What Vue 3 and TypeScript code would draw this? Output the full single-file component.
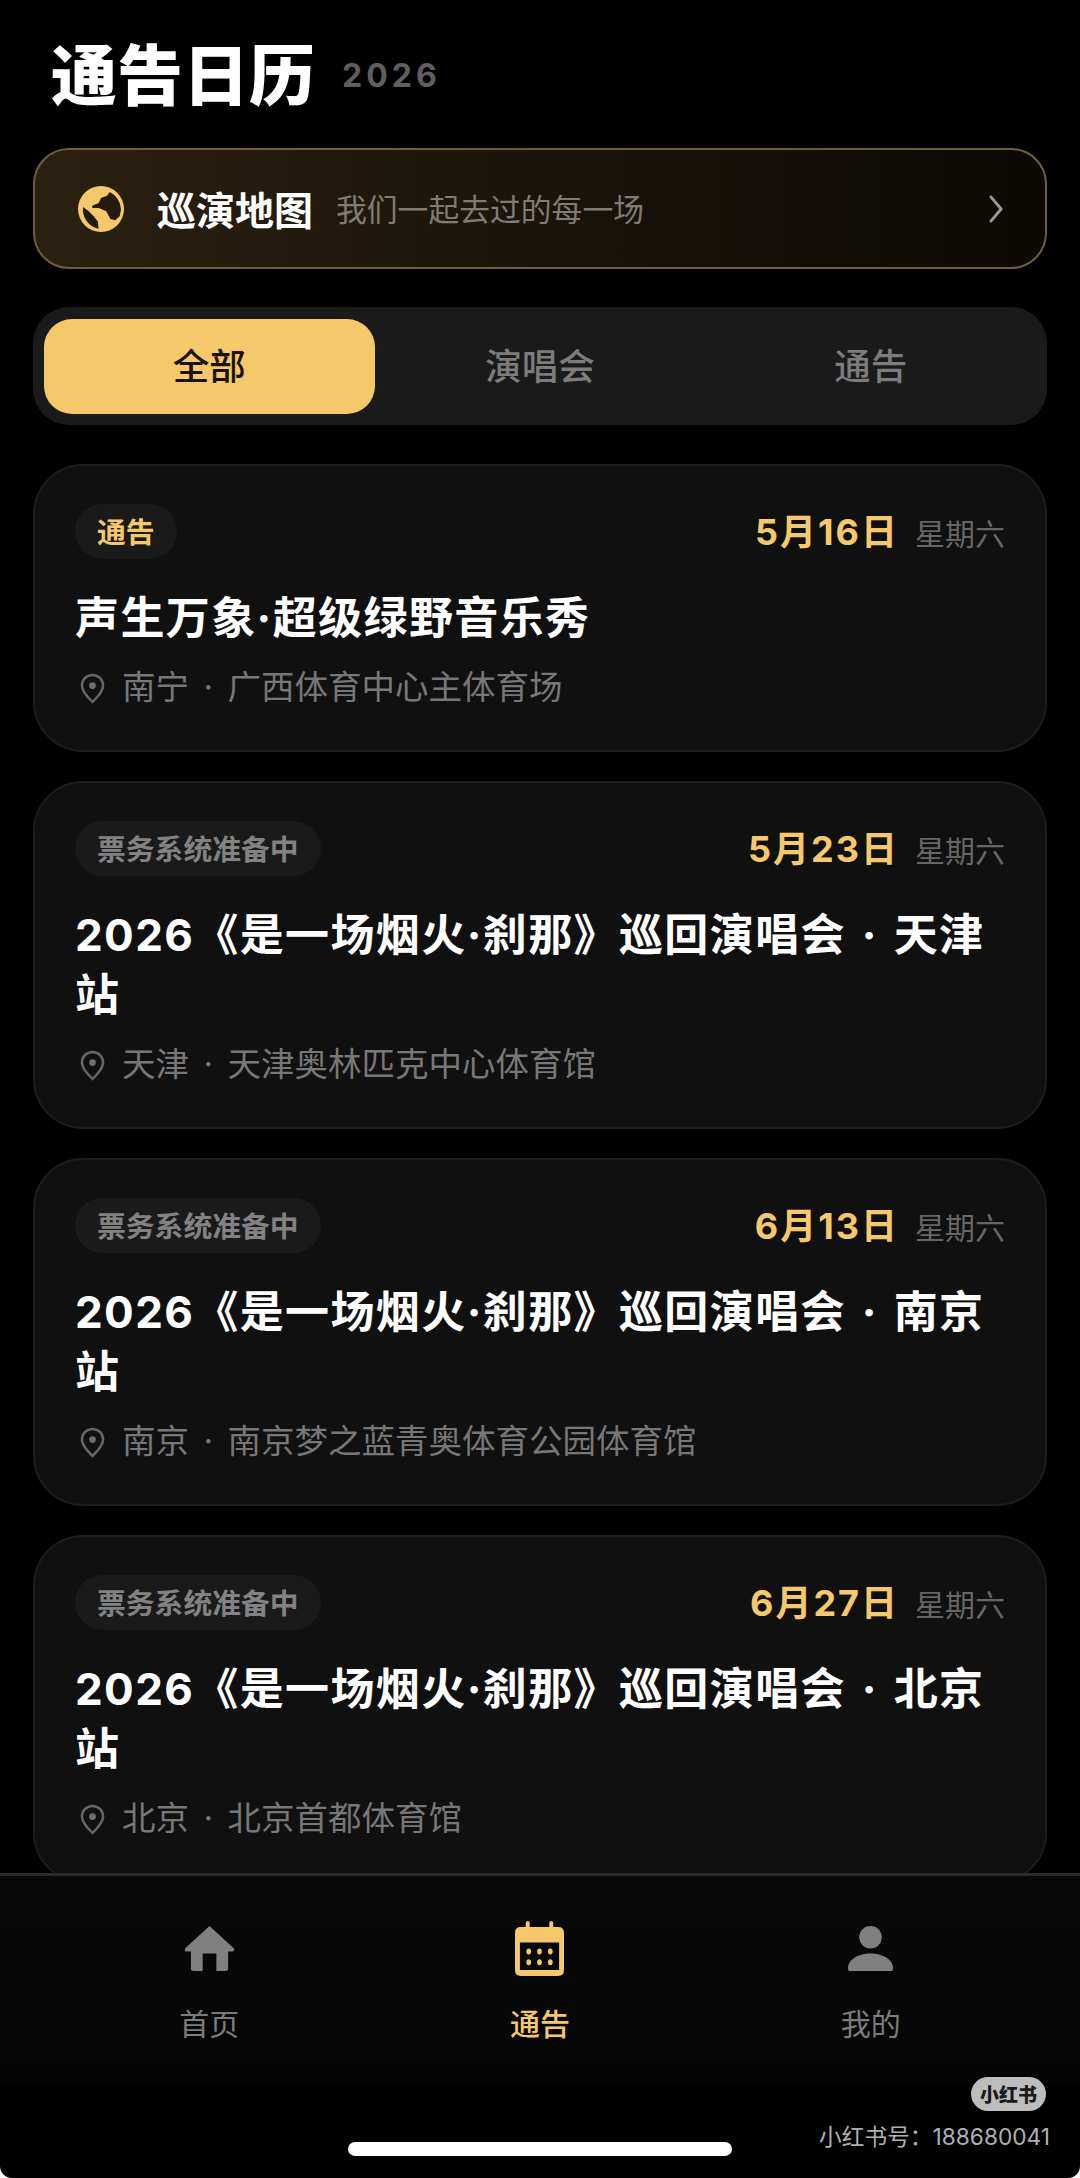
<script setup lang="ts">
interface Item {
  tag: string
  active?: boolean
  date: string
  title: string
  loc: string
}
const items: Item[] = [
  { tag: '通告', active: true, date: '5月16日', title: '声生万象·超级绿野音乐秀', loc: '南宁 · 广西体育中心主体育场' },
  { tag: '票务系统准备中', date: '5月23日', title: '2026《是一场烟火·刹那》巡回演唱会 · 天津站', loc: '天津 · 天津奥林匹克中心体育馆' },
  { tag: '票务系统准备中', date: '6月13日', title: '2026《是一场烟火·刹那》巡回演唱会 · 南京站', loc: '南京 · 南京梦之蓝青奥体育公园体育馆' },
  { tag: '票务系统准备中', date: '6月27日', title: '2026《是一场烟火·刹那》巡回演唱会 · 北京站', loc: '北京 · 北京首都体育馆' },
]
</script>

<template>
  <div class="page">
    <main class="main">
      <header class="head">
        <h1>通告日历</h1>
        <span class="year">2026</span>
      </header>

      <div class="banner">
        <svg class="globe" viewBox="0 0 46 46">
          <circle cx="23" cy="23" r="23" fill="#f5c96b" />
          <path d="M14.300 19.700 L20.700 17 L23 12 L29 9.700 L31.700 6 A20 20 0 0 1 43 23.500 L41.700 30.300 L37.300 34.300 L32.300 33 L28.300 25.300 L20.700 22 L14.300 22 Z" fill="#241b0e" />
          <path d="M5 21 L10.700 25.300 L15.700 30.300 L19.700 35.300 L20.700 42.800 A20 20 0 0 1 5 21 Z" fill="#241b0e" />
        </svg>
        <strong>巡演地图</strong>
        <span class="sub">我们一起去过的每一场</span>
        <svg class="chev" viewBox="0 0 18 32">
          <path d="M3 3 L14 16 L3 29" fill="none" stroke="#9a9a96" stroke-width="3" stroke-linecap="round" stroke-linejoin="round" />
        </svg>
      </div>

      <div class="seg">
        <div class="seg-item on">全部</div>
        <div class="seg-item">演唱会</div>
        <div class="seg-item">通告</div>
      </div>

      <div class="list">
        <article v-for="it in items" :key="it.date" class="card">
          <div class="row">
            <span class="tag" :class="{ hot: it.active }">{{ it.tag }}</span>
            <span class="date">{{ it.date }}</span>
            <span class="week">星期六</span>
          </div>
          <h2>{{ it.title }}</h2>
          <div class="loc">
            <svg viewBox="0 0 26 32">
              <path d="M13 2 C6.500 2 2 7 2 13 C2 20 9 26 13 30 C17 26 24 20 24 13 C24 7 19.500 2 13 2 Z" fill="none" stroke="#666" stroke-width="2.600" />
              <circle cx="13" cy="13" r="3.500" fill="#6e6e6e" />
            </svg>
            <span>{{ it.loc }}</span>
          </div>
        </article>
      </div>
    </main>

    <nav class="nav">
      <div class="nav-item">
        <div class="ico">
          <svg class="i-home" viewBox="0 0 52 48">
            <path d="M26 1 L51 24 Q52 27 49 27 L45 27 L45 45 Q45 47 42 47 L33 47 L33 29 L19 29 L19 47 L10 47 Q7 47 7 45 L7 27 L3 27 Q0 27 1 24 Z" fill="#808080" />
          </svg>
        </div>
        <span>首页</span>
      </div>
      <div class="nav-item cur">
        <div class="ico">
          <svg class="i-cal" viewBox="0 0 50 56">
            <path d="M6 6 H11 V2 Q11 0 13 0 Q15 0 15 2 V6 H35 V2 Q35 0 37 0 Q39 0 39 2 V6 H44 Q50 6 50 12 V50 Q50 56 44 56 H6 Q0 56 0 50 V12 Q0 6 6 6 Z M5 22 V50 H45 V22 Z" fill="#f5c96b" fill-rule="evenodd" />
            <g fill="#f5c96b">
              <ellipse cx="14" cy="31" rx="2.400" ry="3" />
              <ellipse cx="25" cy="31" rx="2.400" ry="3" />
              <ellipse cx="36" cy="31" rx="2.400" ry="3" />
              <ellipse cx="14" cy="42" rx="2.400" ry="3" />
              <ellipse cx="25" cy="42" rx="2.400" ry="3" />
              <ellipse cx="36" cy="42" rx="2.400" ry="3" />
            </g>
          </svg>
        </div>
        <span>通告</span>
      </div>
      <div class="nav-item">
        <div class="ico">
          <svg class="i-user" viewBox="0 0 46 46">
            <circle cx="23" cy="11.500" r="11.500" fill="#808080" />
            <path d="M1 46 Q0 46 0 43 C0 34 11 28 23 28 C35 28 46 34 46 43 Q46 46 45 46 Z" fill="#808080" />
          </svg>
        </div>
        <span>我的</span>
      </div>
    </nav>

    <footer class="foot">
      <div class="bar"></div>
      <div class="mark">
        <span class="badge">小红书</span>
        <span class="rid">小红书号：188680041</span>
      </div>
    </footer>
  </div>
</template>

<style>
html, body { background: #fff; }
</style>

<style scoped>
.page {
  width: 1080px;
  height: 2178px;
  display: flex;
  flex-direction: column;
  background: #000;
  overflow: hidden;
  border-radius: 0 0 12px 12px;
  font-family: "Inter", "Noto Sans CJK SC", sans-serif;
}
.main {
  height: 1873px;
  flex: none;
  padding: 0 33px;
  box-sizing: border-box;
  overflow: hidden;
}
.head {
  height: 148px;
  padding: 0 0 6px 18px;
  box-sizing: border-box;
  display: flex;
  align-items: center;
  gap: 27px;
}
h1 {
  margin: 0;
  font: 900 66px/1 "Noto Sans CJK SC", sans-serif;
  color: #fff;
}
.year {
  font: 700 32px/1 "Inter", sans-serif;
  letter-spacing: 4px;
  color: #5f5f5f;
  margin-top: 10px;
}
.banner {
  height: 121px;
  box-sizing: border-box;
  border: 2px solid #6f5d3d;
  border-radius: 36px;
  background: linear-gradient(90deg, #2b2110 0%, #1a140a 50%, #0c0905 100%);
  display: flex;
  align-items: center;
  padding: 0 40px 0 43px;
}
.globe { width: 46px; height: 46px; flex: none; }
.banner strong {
  margin-left: 33px;
  font: 700 39px/1 "Noto Sans CJK SC", sans-serif;
  color: #fff;
}
.sub {
  margin-left: 23px;
  font: 400 30.800px/1 "Noto Sans CJK SC", sans-serif;
  color: #7f7c76;
}
.chev { width: 17px; height: 30px; margin-left: auto; }
.seg {
  margin-top: 38px;
  height: 118px;
  box-sizing: border-box;
  background: #1a1a1a;
  border-radius: 36px;
  padding: 12px 11px 11px;
  display: grid;
  grid-template-columns: repeat(3, 1fr);
}
.seg-item {
  display: flex;
  align-items: center;
  justify-content: center;
  padding-bottom: 3px;
  font: 500 36.500px/1 "Noto Sans CJK SC", sans-serif;
  color: #7c7c7c;
  border-radius: 28px;
}
.seg-item.on { background: #f5c96b; color: #1c1204; }
.list {
  margin-top: 39px;
  display: flex;
  flex-direction: column;
  gap: 29px;
}
.card {
  background: #101010;
  border: 2px solid #1d1d1d;
  border-radius: 50px;
  padding: 38px 40px 40px 40px;
}
.row {
  display: flex;
  align-items: center;
  height: 55px;
}
.tag {
  height: 55px;
  padding: 0 22px;
  display: flex;
  align-items: center;
  border-radius: 28px;
  background: #1a1a1a;
  font: 700 28.800px/1 "Noto Sans CJK SC", sans-serif;
  color: #828282;
  margin-right: auto;
}
.tag.hot { color: #f5c96b; }
.date {
  font: 700 36px/1 "Inter", "Noto Sans CJK SC", sans-serif;
  color: #f5c96b;
  letter-spacing: 2px;
}
.week {
  margin-left: 16px;
  font: 400 30px/1 "Noto Sans CJK SC", sans-serif;
  color: #666;
}
h2 {
  margin: 29px 0 0;
  font: 700 44px/60px "Inter", "Noto Sans CJK SC", sans-serif;
  letter-spacing: 1.400px;
  word-spacing: 4px;
  color: #fff;
}
.loc {
  margin-top: 18px;
  display: flex;
  align-items: center;
  height: 44px;
  padding-left: 5px;
  gap: 17px;
  font: 400 33.500px/1 "Inter", "Noto Sans CJK SC", sans-serif;
  word-spacing: 5px;
  color: #777;
}
.loc svg { width: 25px; height: 31px; flex: none; }
.nav {
  height: 210px;
  flex: none;
  box-sizing: border-box;
  border-top: 3px solid #2a2a2a;
  background: linear-gradient(180deg, #090909 0%, #070707 70%, #040404 100%);
  display: grid;
  grid-template-columns: repeat(3, 1fr);
  padding: 44px 44px 0;
}
.nav-item {
  display: flex;
  flex-direction: column;
  align-items: center;
  font: 400 30px/1 "Noto Sans CJK SC", sans-serif;
  color: #7c7c7c;
}
.ico {
  height: 56px;
  margin-bottom: 31px;
  display: flex;
  align-items: center;
}
.i-home { width: 51px; height: 47px; }
.i-cal { width: 49px; height: 55px; }
.i-user { width: 45px; height: 45px; }
.nav-item.cur { color: #f5c96b; font-weight: 500; }
.foot {
  flex: 1;
  display: flex;
  justify-content: center;
  position: relative;
}
.bar {
  margin-top: 59px;
  width: 384px;
  height: 14px;
  background: #fff;
  border-radius: 7px;
}
.mark {
  position: absolute;
  right: 30px;
  top: -6px;
  display: flex;
  flex-direction: column;
  align-items: flex-end;
  gap: 14px;
}
.badge {
  width: 75px;
  height: 34px;
  margin-right: 4px;
  border-radius: 17px;
  background: #bdbdbd;
  color: #1a1a1a;
  font: 900 19px/34px "Noto Sans CJK SC", sans-serif;
  text-align: center;
}
.rid {
  font: 400 22.700px/24px "Inter", "Noto Sans CJK SC", sans-serif;
  color: #b0b0b0;
}
</style>
